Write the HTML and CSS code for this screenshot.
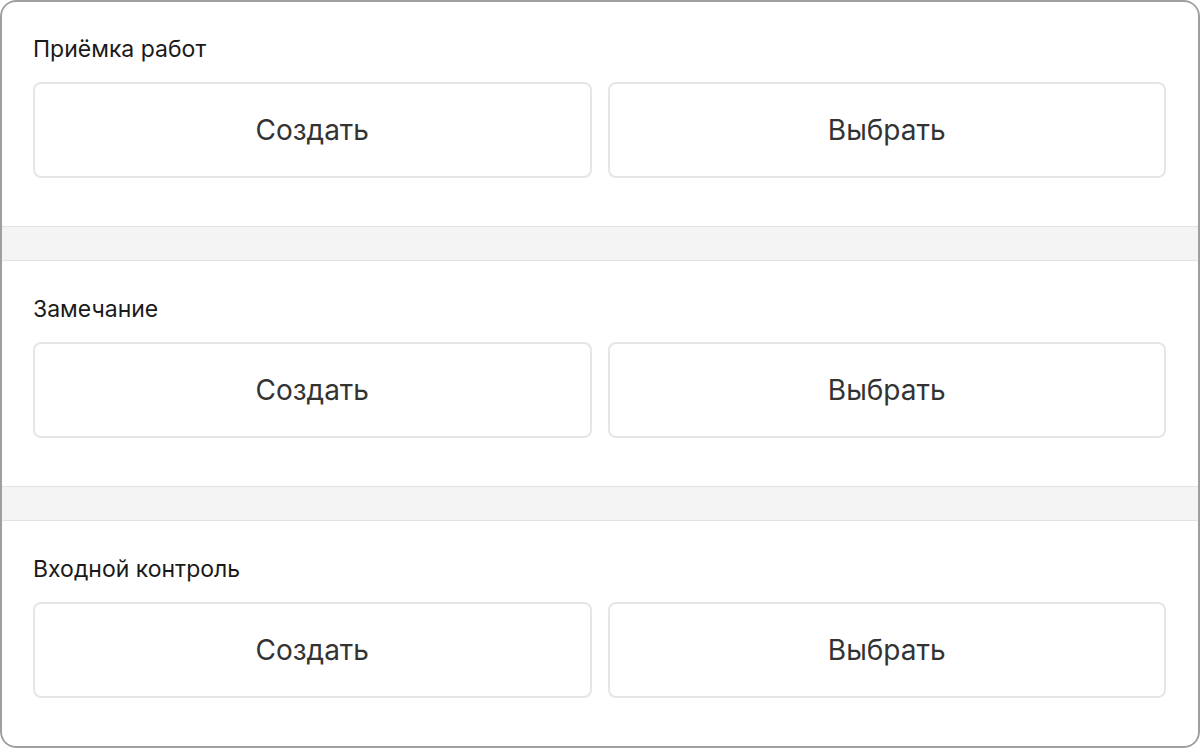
FILE: index.html
```html
<!DOCTYPE html>
<html lang="ru">
<head>
<meta charset="utf-8">
<link rel="stylesheet" href="styles.css">
</head>
<body>
<div class="frame">
  <section class="card">
    <div class="card-title">Приёмка работ</div>
    <div class="actions">
      <button class="btn">Создать</button>
      <button class="btn">Выбрать</button>
    </div>
  </section>
  <section class="card">
    <div class="card-title">Замечание</div>
    <div class="actions">
      <button class="btn">Создать</button>
      <button class="btn">Выбрать</button>
    </div>
  </section>
  <section class="card">
    <div class="card-title">Входной контроль</div>
    <div class="actions">
      <button class="btn">Создать</button>
      <button class="btn">Выбрать</button>
    </div>
  </section>
</div>
</body>
</html>
```
FILE: styles.css
```css
* { box-sizing: border-box; }
html, body { margin: 0; padding: 0; background: #fff; }
body { font-family: Inter, "Noto Sans", sans-serif; }

.frame {
  position: relative;
  width: 1200px;
  height: 748px;
  border-radius: 16px;
  overflow: hidden;
  background: #f4f4f4;
  display: flex;
  flex-direction: column;
  gap: 33px;
}
.frame::after {
  content: "";
  position: absolute;
  inset: 0;
  border: 2px solid #a19e9e;
  border-radius: 16px;
  pointer-events: none;
}

.card {
  height: 227px;
  background: #fff;
  border: 1px solid #e2e2e2;
  border-radius: 4px;
  padding: 34px 33px 0 32px;
  display: flex;
  flex-direction: column;
}

.card-title {
  font-size: 23px;
  line-height: 28px;
  color: #1a1a1a;
  height: 47px;
}

.actions {
  display: grid;
  grid-template-columns: 1fr 1fr;
  gap: 16px;
}

.btn {
  height: 96px;
  background: #fff;
  border: 2px solid #e6e6e6;
  border-radius: 8px;
  font-family: inherit;
  font-size: 28px;
  color: #333;
  padding: 0;
}
```
